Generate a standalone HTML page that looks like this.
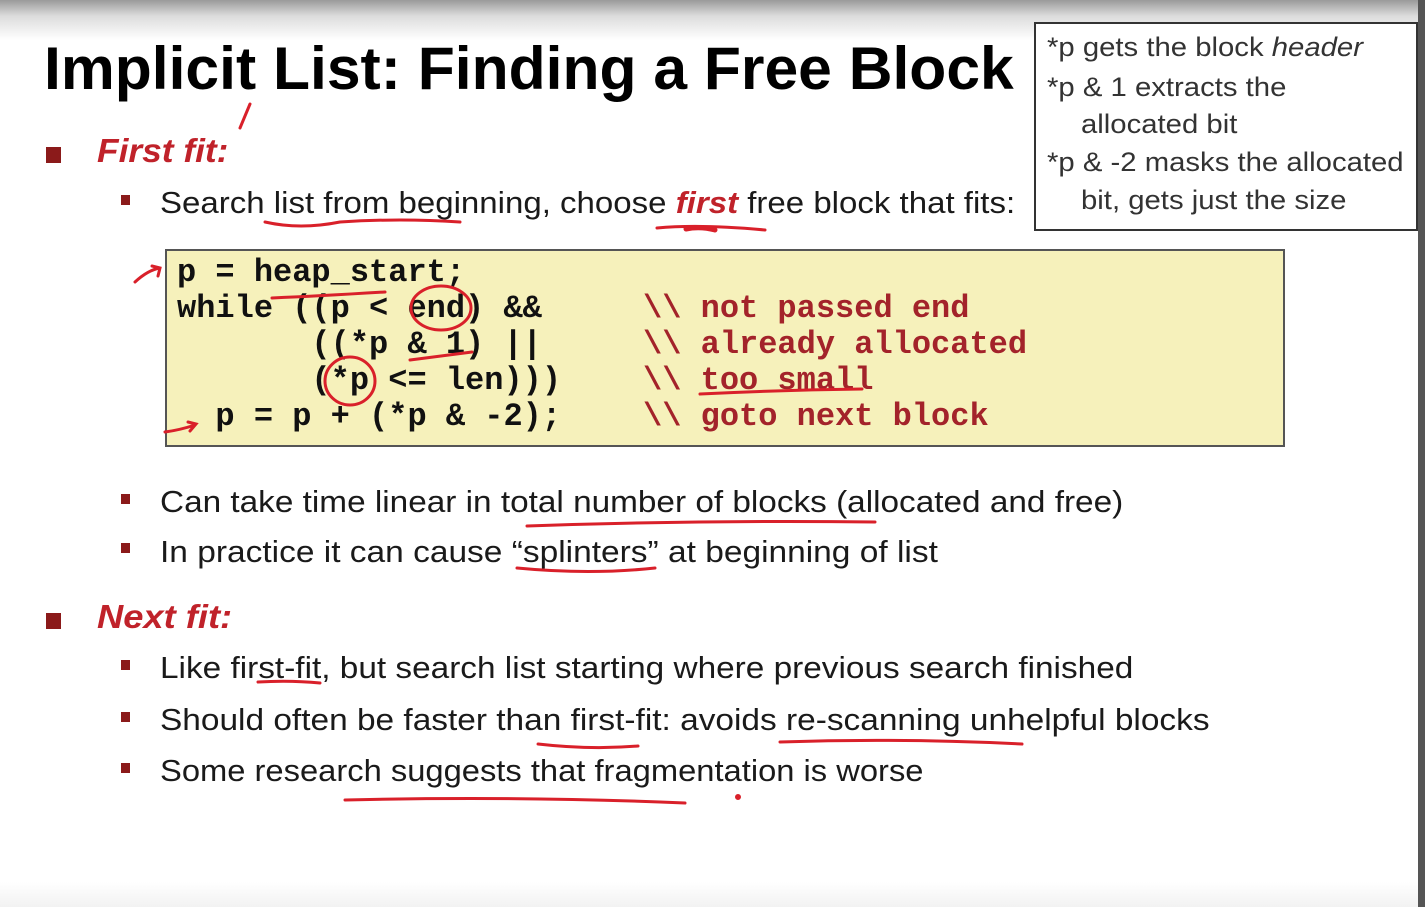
<!DOCTYPE html>
<html><head><meta charset="utf-8"><style>
html,body{margin:0;padding:0}
body{width:1425px;height:907px;position:relative;overflow:hidden;background:#fff;font-family:"Liberation Sans",sans-serif;}
.t{position:absolute;white-space:nowrap;transform-origin:0 50%;}
.top{position:absolute;left:0;top:0;width:1425px;height:40px;background:linear-gradient(#9a9a9a,#dcdcdc 40%,#fff);}
.bot{position:absolute;left:0;bottom:0;width:1425px;height:25px;background:linear-gradient(#fff,#f2f2f2);}
.rs{position:absolute;right:0;top:0;width:7px;height:907px;background:#555;}
.b1{position:absolute;width:15px;height:16px;background:#8b1a1a;}
.b2{position:absolute;width:9px;height:10px;background:#8b1a1a;}
.h{font-weight:bold;font-size:60px;color:#000;}
.l1{font-style:italic;font-weight:bold;font-size:33px;color:#c0222a;}
.l2{font-size:31px;color:#1a1a1a;}
.code{position:absolute;left:165px;top:249px;width:1116px;height:194px;background:#f6f1bb;border:2px solid #555;}
.c{position:absolute;font-family:"Liberation Mono",monospace;font-weight:bold;font-size:32px;white-space:pre;color:#111;line-height:36px;}
.cm{color:#a3232a;}
.box{position:absolute;left:1034px;top:22px;width:380px;height:205px;border:2px solid #333;background:#fff;}
.bx{font-size:27px;color:#333;}
</style></head><body>
<div class="top"></div><div class="bot"></div><div class="rs"></div>

<div class="t h" style="left:44px;top:34px;transform:scaleX(1.01)">Implicit List: Finding a Free Block</div>

<div class="box"></div>
<div class="t bx" style="left:1047px;top:32px;transform:scaleX(1.085)">*p gets the block <i>header</i></div>
<div class="t bx" style="left:1047px;top:72px;transform:scaleX(1.085)">*p &amp; 1 extracts the</div>
<div class="t bx" style="left:1081px;top:109px;transform:scaleX(1.085)">allocated bit</div>
<div class="t bx" style="left:1047px;top:147px;transform:scaleX(1.085)">*p &amp; -2 masks the allocated</div>
<div class="t bx" style="left:1081px;top:185px;transform:scaleX(1.085)">bit, gets just the size</div>

<div class="b1" style="left:46px;top:147px"></div>
<div class="t l1" style="left:97px;top:132px;transform:scaleX(1.07)">First fit:</div>
<div class="b2" style="left:121px;top:195px"></div>
<div class="t l2" style="left:160px;top:185px;transform:scaleX(1.065)">Search list from beginning, choose <i style="color:#c0222a;font-weight:bold">first</i> free block that fits:</div>

<div class="code"></div>
<div class="c" style="left:177px;top:255px">p = heap_start;
while ((p &lt; end) &amp;&amp;
       ((*p &amp; 1) ||
       (*p &lt;= len)))
  p = p + (*p &amp; -2);</div>
<div class="c cm" style="left:643px;top:291px">\\ not passed end
\\ already allocated
\\ too small
\\ goto next block</div>

<div class="b2" style="left:121px;top:494px"></div>
<div class="t l2" style="left:160px;top:484px;transform:scaleX(1.075)">Can take time linear in total number of blocks (allocated and free)</div>
<div class="b2" style="left:121px;top:543px"></div>
<div class="t l2" style="left:160px;top:534px;transform:scaleX(1.08)">In practice it can cause “splinters” at beginning of list</div>

<div class="b1" style="left:46px;top:613px"></div>
<div class="t l1" style="left:97px;top:598px;transform:scaleX(1.1)">Next fit:</div>
<div class="b2" style="left:121px;top:660px"></div>
<div class="t l2" style="left:160px;top:650px;transform:scaleX(1.076)">Like first-fit, but search list starting where previous search finished</div>
<div class="b2" style="left:121px;top:712px"></div>
<div class="t l2" style="left:160px;top:702px;transform:scaleX(1.078)">Should often be faster than first-fit: avoids re-scanning unhelpful blocks</div>
<div class="b2" style="left:121px;top:763px"></div>
<div class="t l2" style="left:160px;top:753px;transform:scaleX(1.055)">Some research suggests that fragmentation is worse</div>

<svg style="position:absolute;left:0;top:0" width="1425" height="907" fill="none" stroke="#d9202a" stroke-width="3" stroke-linecap="round">
<path d="M250 104 L240 128"/>
<path d="M265 222 Q300 230 340 222 Q400 218 460 222"/>
<path d="M657 228 Q700 224 765 230"/>
<path d="M686 229 Q700 226 715 230" stroke-width="5"/>
<path d="M135 282 Q148 270 160 268 M152 266 L160 268 L158 276"/>
<path d="M272 298 Q320 296 385 292"/>
<ellipse cx="441" cy="308" rx="30" ry="22"/>
<path d="M410 360 Q440 356 472 352"/>
<ellipse cx="350" cy="381" rx="25" ry="24"/>
<path d="M700 394 Q780 390 862 389"/>
<path d="M165 432 Q180 430 195 425 M188 422 L196 424 L190 431"/>
<path d="M527 526 Q700 520 875 522"/>
<path d="M517 568 Q590 575 655 568"/>
<path d="M258 682 Q290 680 320 683"/>
<path d="M538 744 Q590 750 638 746"/>
<path d="M780 742 Q900 738 1022 744"/>
<path d="M345 800 Q520 796 685 803"/>
<circle cx="738" cy="797" r="1.5"/>
</svg>
</body></html>
